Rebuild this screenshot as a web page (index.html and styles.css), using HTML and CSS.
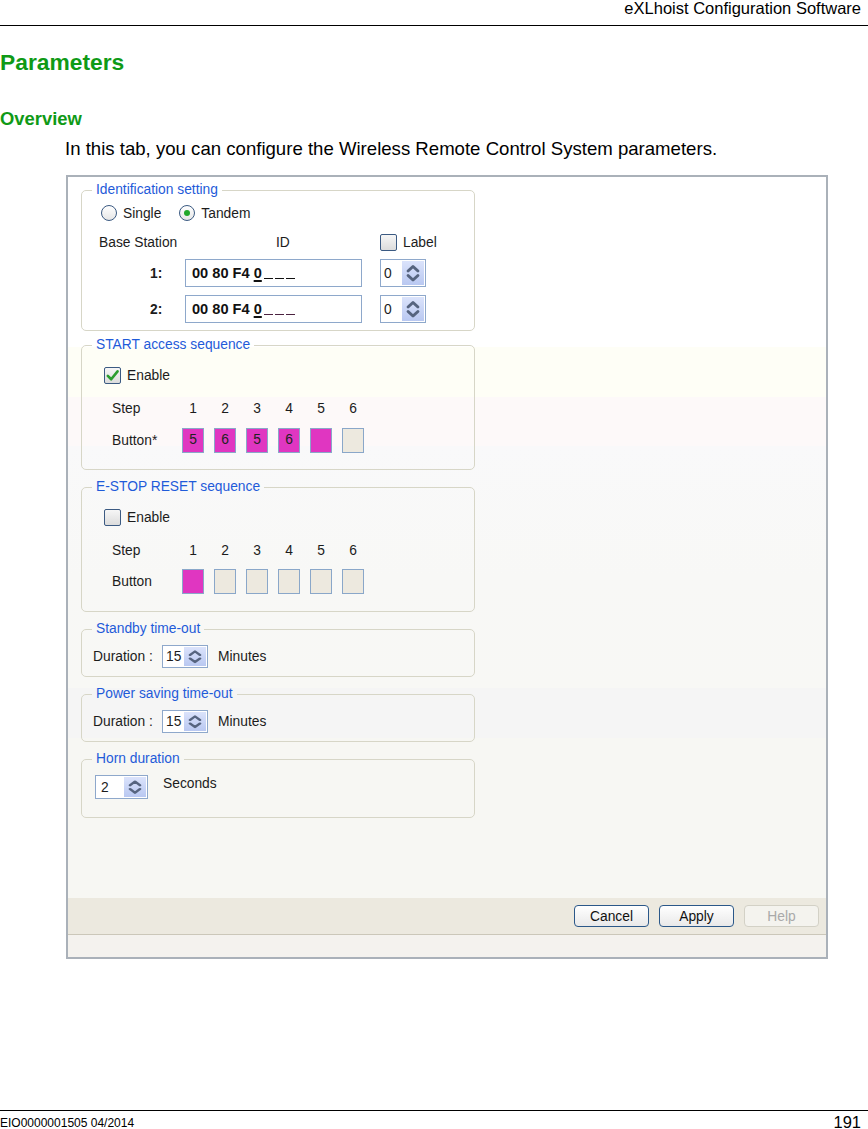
FILE: index.html
```html
<!DOCTYPE html>
<html lang="en">
<head>
<meta charset="utf-8">
<title>Parameters</title>
<link rel="stylesheet" href="styles.css">
</head>
<body>
<div class="page">
  <div class="runhead">eXLhoist Configuration Software</div>
  <h1 class="title">Parameters</h1>
  <h2 class="subtitle">Overview</h2>
  <p class="intro">In this tab, you can configure the Wireless Remote Control System parameters.</p>

  <div class="window">
    <div class="win-body">
      <fieldset class="grp grp-id">
        <legend>Identification setting</legend>
        <div class="radio-row">
          <span class="radio"></span><span class="lbl">Single</span>
          <span class="radio on"></span><span class="lbl">Tandem</span>
        </div>
        <div class="head-row">
          <span class="c-base">Base Station</span>
          <span class="c-id">ID</span>
          <span class="check"></span><span class="lbl">Label</span>
        </div>
        <div class="id-row first">
          <span class="idx">1:</span>
          <span class="idbox">00 80 F4 <span class="ul">0</span><span class="blank"></span><span class="blank"></span><span class="blank"></span></span>
          <span class="spin s-id"><span class="val">0</span><span class="arrows"><svg viewBox="0 0 20 24" preserveAspectRatio="none"><path d="M5.5 10 L10 5.5 L14.5 10 M5.5 14.5 L10 19 L14.5 14.5"/></svg></span></span>
        </div>
        <div class="id-row second">
          <span class="idx">2:</span>
          <span class="idbox">00 80 F4 <span class="ul">0</span><span class="blank dark"></span><span class="blank dark"></span><span class="blank dark"></span></span>
          <span class="spin s-id"><span class="val">0</span><span class="arrows"><svg viewBox="0 0 20 24" preserveAspectRatio="none"><path d="M5.5 10 L10 5.5 L14.5 10 M5.5 14.5 L10 19 L14.5 14.5"/></svg></span></span>
        </div>
      </fieldset>

      <fieldset class="grp grp-start">
        <legend>START access sequence</legend>
        <div class="en-row">
          <span class="check on"><svg viewBox="0 0 16 16"><path d="M3 8.4 L6.6 12 L13.4 3.6"/></svg></span><span class="lbl">Enable</span>
        </div>
        <div class="seq-row step">
          <span class="seq-lbl">Step</span>
          <span class="cell">1</span><span class="cell">2</span><span class="cell">3</span><span class="cell">4</span><span class="cell">5</span><span class="cell">6</span>
        </div>
        <div class="seq-row btns">
          <span class="seq-lbl">Button*</span>
          <span class="cell box mag">5</span><span class="cell box mag">6</span><span class="cell box mag">5</span><span class="cell box mag">6</span><span class="cell box mag"></span><span class="cell box"></span>
        </div>
      </fieldset>

      <fieldset class="grp grp-estop">
        <legend>E-STOP RESET sequence</legend>
        <div class="en-row">
          <span class="check"></span><span class="lbl">Enable</span>
        </div>
        <div class="seq-row step">
          <span class="seq-lbl">Step</span>
          <span class="cell">1</span><span class="cell">2</span><span class="cell">3</span><span class="cell">4</span><span class="cell">5</span><span class="cell">6</span>
        </div>
        <div class="seq-row btns">
          <span class="seq-lbl">Button</span>
          <span class="cell box mag"></span><span class="cell box"></span><span class="cell box"></span><span class="cell box"></span><span class="cell box"></span><span class="cell box"></span>
        </div>
      </fieldset>

      <fieldset class="grp grp-dur">
        <legend>Standby time-out</legend>
        <div class="dur-row">
          <span class="dur-lbl">Duration :</span>
          <span class="spin s-dur"><span class="val">15</span><span class="arrows"><svg viewBox="0 0 20 24" preserveAspectRatio="none"><path d="M5.5 10 L10 5.5 L14.5 10 M5.5 14.5 L10 19 L14.5 14.5"/></svg></span></span>
          <span class="unit">Minutes</span>
        </div>
      </fieldset>

      <fieldset class="grp grp-dur">
        <legend>Power saving time-out</legend>
        <div class="dur-row">
          <span class="dur-lbl">Duration :</span>
          <span class="spin s-dur"><span class="val">15</span><span class="arrows"><svg viewBox="0 0 20 24" preserveAspectRatio="none"><path d="M5.5 10 L10 5.5 L14.5 10 M5.5 14.5 L10 19 L14.5 14.5"/></svg></span></span>
          <span class="unit">Minutes</span>
        </div>
      </fieldset>

      <fieldset class="grp grp-horn">
        <legend>Horn duration</legend>
        <div class="horn-row">
          <span class="spin s-horn"><span class="val">2</span><span class="arrows"><svg viewBox="0 0 20 24" preserveAspectRatio="none"><path d="M5.5 10 L10 5.5 L14.5 10 M5.5 14.5 L10 19 L14.5 14.5"/></svg></span></span>
          <span class="unit">Seconds</span>
        </div>
      </fieldset>
    </div>
    <div class="win-foot">
      <span class="btn">Cancel</span>
      <span class="btn">Apply</span>
      <span class="btn disabled">Help</span>
    </div>
    <div class="win-status"></div>
  </div>

  <div class="pagefoot">
    <span class="docid">EIO0000001505 04/2014</span>
    <span class="pageno">191</span>
  </div>
</div>
</body>
</html>
```

FILE: styles.css
```css
html, body {
  margin: 0;
  padding: 0;
  background: #ffffff;
}
body {
  font-family: "Liberation Sans", Arial, sans-serif;
  color: #000;
}
.page {
  height: 1129px;
  display: flex;
  flex-direction: column;
}
.runhead {
  box-sizing: border-box;
  height: 26px;
  border-bottom: 1px solid #000;
  text-align: right;
  padding-right: 7px;
  font-size: 16.5px;
  line-height: 17px;
}
.title {
  margin: 23px 0 0 0;
  font-size: 22.8px;
  line-height: 26px;
  font-weight: bold;
  color: #0f9a16;
}
.subtitle {
  margin: 33px 0 0 0;
  font-size: 18.4px;
  line-height: 22px;
  font-weight: bold;
  color: #0f9a16;
}
.intro {
  margin: 8px 0 0 65px;
  font-size: 18.6px;
  line-height: 22px;
}

/* ---------- window ---------- */
.window {
  margin: 15px 0 0 66px;
  width: 762px;
  height: 784px;
  box-sizing: border-box;
  border: 2px solid #aab1b9;
  display: flex;
  flex-direction: column;
  font-size: 13.8px;
  color: #1c1c1c;
  background: linear-gradient(to bottom,
    #ffffff 0px, #ffffff 170px,
    #fefef6 170px, #fefef6 220px,
    #fdf9f9 220px, #fdf9f9 269px,
    #f9f9fa 269px, #f8f8f6 400px,
    #f8f8f5 511px, #f5f5f5 511px, #f5f5f5 561px,
    #f7f7f3 561px, #f7f7f3 100%);
}
.win-body {
  flex: 1;
  padding: 5px 0 0 13px;
}
.grp {
  width: 394px;
  box-sizing: border-box;
  margin: 0;
  padding: 0;
  border: 1px solid #d7d6c7;
  border-radius: 5px;
  min-width: 0;
}
.grp legend {
  margin-left: 10px;
  padding: 0 4px;
  font-size: 13.8px;
  line-height: 16px;
  color: #1f5bd9;
}
.grp-id { padding-bottom: 7px; }
.grp-start { margin-top: 6px; padding-bottom: 16px; }
.grp-estop { margin-top: 9px; padding-bottom: 17px; }
.grp-dur { margin-top: 9px; padding-bottom: 8px; }
.grp-horn { margin-top: 9px; padding-bottom: 18px; }

.lbl { white-space: nowrap; }

/* radio */
.radio-row {
  display: flex;
  align-items: center;
  height: 20px;
  margin-top: 5px;
  padding-left: 19px;
}
.radio {
  width: 16px;
  height: 16px;
  box-sizing: border-box;
  border: 1.5px solid #3b5a82;
  border-radius: 50%;
  background: linear-gradient(#ffffff, #e6e6e6);
  display: flex;
  align-items: center;
  justify-content: center;
  margin-right: 6px;
}
.radio.on::after {
  content: "";
  width: 6px;
  height: 6px;
  border-radius: 50%;
  background: #22a82a;
}
.radio-row .lbl { margin-right: 18px; }

/* check */
.check {
  width: 17px;
  height: 17px;
  box-sizing: border-box;
  border: 1.5px solid #3b5a82;
  border-radius: 2px;
  background: linear-gradient(#f6f6f6, #dcdcdc);
  margin-right: 6px;
  display: flex;
  align-items: center;
  justify-content: center;
}
.check svg { width: 15px; height: 15px; }
.check svg path {
  fill: none;
  stroke: #2b9d2f;
  stroke-width: 2.8;
  stroke-linecap: round;
  stroke-linejoin: round;
}

.head-row {
  display: flex;
  align-items: center;
  height: 20px;
  margin-top: 9px;
  padding-left: 17px;
}
.c-base { width: 177px; }
.c-id { width: 104px; }

.id-row {
  display: flex;
  align-items: center;
  height: 28px;
  padding-left: 68px;
}
.id-row.first { margin-top: 7px; }
.id-row.second { margin-top: 8px; }
.idx {
  width: 35px;
  font-weight: bold;
}
.idbox {
  width: 177px;
  height: 28px;
  box-sizing: border-box;
  border: 1.5px solid #8ea8cb;
  background: #fff;
  font-weight: bold;
  font-size: 14.6px;
  color: #111;
  display: flex;
  align-items: center;
  padding-left: 6px;
  margin-right: 18px;
  white-space: pre;
}
.ul { text-decoration: underline; text-underline-offset: 2px; text-decoration-thickness: 1.5px; }
.blank {
  width: 9px;
  height: 12px;
  margin-left: 2px;
  border-bottom: 1.6px solid #111;
  box-sizing: border-box;
}
.ul + .blank { margin-left: 2px; }
.blank.dark { border-bottom-color: #4b2240; }

/* spinner */
.spin {
  display: flex;
  align-items: stretch;
  box-sizing: border-box;
  border: 1.5px solid #8ea8cb;
  background: #fff;
}
.spin .val {
  flex: 1;
  display: flex;
  align-items: center;
  padding-left: 3px;
}
.spin .arrows {
  width: 22px;
  margin: 1px;
  background: linear-gradient(#dbe3fb, #b9c8f1);
  display: flex;
}
.spin .arrows svg { width: 100%; height: 100%; }
.spin .arrows path {
  fill: none;
  stroke: #56647f;
  stroke-width: 2.6;
  stroke-linecap: round;
  stroke-linejoin: round;
}
.s-id { width: 46px; height: 28px; }
.s-dur { width: 46px; height: 23px; }
.s-horn { width: 53px; height: 24px; }
.s-horn .val { padding-left: 5px; }

/* sequences */
.en-row {
  display: flex;
  align-items: center;
  height: 20px;
  margin-top: 12px;
  padding-left: 22px;
}
.seq-row {
  display: flex;
  align-items: center;
  padding-left: 30px;
  gap: 10px;
}
.seq-row.step { height: 20px; margin-top: 13px; }
.seq-row.btns { height: 25px; margin-top: 10px; }
.grp-estop .seq-row.btns { margin-top: 9px; }
.seq-lbl { width: 60px; }
.cell {
  width: 22px;
  text-align: center;
}
.box {
  height: 25px;
  box-sizing: border-box;
  border: 1px solid #8aa7c9;
  background: #ede9df;
  line-height: 21px;
  color: #222;
}
.box.mag { background: #e036c1; }

/* durations */
.dur-row {
  display: flex;
  align-items: center;
  height: 23px;
  margin-top: 8px;
  padding-left: 11px;
}
.dur-lbl { width: 69px; }
.unit { margin-left: 10px; }
.horn-row {
  display: flex;
  align-items: flex-start;
  height: 24px;
  margin-top: 8px;
  padding-left: 13px;
}
.horn-row .unit { margin-left: 15px; margin-top: 1px; }

/* footer bar */
.win-foot {
  height: 37px;
  box-sizing: border-box;
  background: #ece9df;
  border-bottom: 1px solid #cbc7b9;
  display: flex;
  justify-content: flex-end;
  align-items: center;
  gap: 10px;
  padding-right: 7px;
}
.btn {
  width: 75px;
  height: 22px;
  box-sizing: border-box;
  border: 1.5px solid #2b5889;
  border-radius: 4px;
  background: linear-gradient(#ffffff, #e9e9e9);
  display: flex;
  align-items: center;
  justify-content: center;
  font-size: 13.8px;
  color: #111;
}
.btn.disabled {
  border-color: #d3d1c6;
  background: #f4f3ee;
  color: #a9a9a9;
}
.win-status {
  height: 22px;
  background: #f4f2ee;
}

/* page footer */
.pagefoot {
  margin-top: auto;
  height: 19px;
  box-sizing: border-box;
  border-top: 1px solid #000;
  display: flex;
  justify-content: space-between;
  align-items: flex-end;
  padding-right: 7px;
}
.docid { font-size: 12px; line-height: 11px; }
.pageno { font-size: 16.5px; line-height: 13px; }
```
